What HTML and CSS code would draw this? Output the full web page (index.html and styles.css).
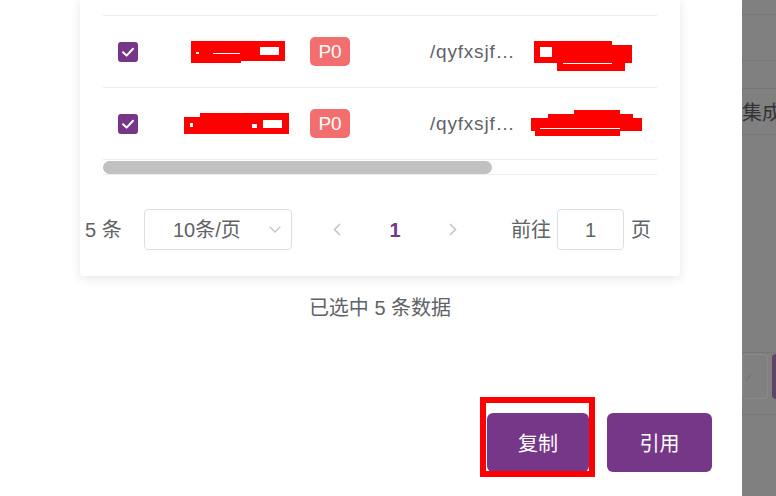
FILE: index.html
```html
<!DOCTYPE html>
<html lang="zh">
<head>
<meta charset="utf-8">
<title>复制</title>
<link rel="stylesheet" href="styles.css">
</head>
<body>
<div class="page">
  <div class="dialog">
    <div class="card">
      <div class="table">
        <div class="thead"></div>
        <div class="row">
          <div class="cell cell-check"><span class="checkbox"><svg width="20" height="20" viewBox="0 0 20 20"><path d="M5 10.2 L8.6 13.6 L15 6.8" fill="none" stroke="#fff" stroke-width="2" stroke-linecap="round" stroke-linejoin="round"/></svg></span></div>
          <div class="cell"><svg class="redact shift7" width="94" height="22" viewBox="0 0 94 22"><rect x="0" y="0" width="94" height="20" fill="#f00"/><rect x="0" y="18" width="50" height="4" fill="#f00"/><rect x="69" y="6" width="19" height="8" fill="#fff"/><rect x="22" y="12" width="27" height="1" fill="#fff"/><rect x="5" y="11" width="3" height="2" fill="#fff"/></svg></div>
          <div class="cell"><span class="tag">P0</span></div>
          <div class="cell path">/qyfxsjf…</div>
          <div class="cell"><svg class="redact shift3" width="100" height="41" viewBox="0 0 100 41"><rect x="0" y="10" width="78" height="22" fill="#f00"/><rect x="78" y="14" width="20" height="18" fill="#f00"/><rect x="23" y="24" width="68" height="16" fill="#f00"/><rect x="6" y="16" width="12" height="10" fill="#fff"/><rect x="29" y="32" width="49" height="1" fill="#fff"/></svg></div>
        </div>
        <div class="row">
          <div class="cell cell-check"><span class="checkbox"><svg width="20" height="20" viewBox="0 0 20 20"><path d="M5 10.2 L8.6 13.6 L15 6.8" fill="none" stroke="#fff" stroke-width="2" stroke-linecap="round" stroke-linejoin="round"/></svg></span></div>
          <div class="cell"><svg class="redact" width="105" height="22" viewBox="0 0 105 22"><rect x="16" y="0" width="89" height="21" fill="#f00"/><rect x="0" y="4" width="17" height="17" fill="#f00"/><rect x="79" y="7" width="19" height="8" fill="#fff"/><rect x="6" y="10" width="3" height="4" fill="#fff"/><rect x="68" y="11" width="5" height="4" fill="#fff"/></svg></div>
          <div class="cell"><span class="tag">P0</span></div>
          <div class="cell path">/qyfxsjf…</div>
          <div class="cell"><svg class="redact" width="112" height="27" viewBox="0 0 112 27"><rect x="43" y="0" width="46" height="8" fill="#f00"/><rect x="17" y="4" width="85" height="9" fill="#f00"/><rect x="0" y="8" width="111" height="13" fill="#f00"/><rect x="4" y="18" width="85" height="8" fill="#f00"/><rect x="9" y="18" width="80" height="1" fill="#fff"/></svg></div>
        </div>
        <div class="scroll"><div class="thumb"></div></div>
      </div>
      <div class="pagination">
        <span class="total">5 条</span>
        <div class="select">
          <span>10条/页</span>
          <svg width="12" height="7" viewBox="0 0 12 7"><path d="M0.6 0.6 L6 6 L11.4 0.6" fill="none" stroke="#c0c4cc" stroke-width="1.3"/></svg>
        </div>
        <span class="pbtn prev"><svg width="8" height="13" viewBox="0 0 8 13"><path d="M7 1 L1.5 6.5 L7 12" fill="none" stroke="#c0c4cc" stroke-width="1.6"/></svg></span>
        <span class="pbtn pager">1</span>
        <span class="pbtn next"><svg width="8" height="13" viewBox="0 0 8 13"><path d="M1 1 L6.5 6.5 L1 12" fill="none" stroke="#c0c4cc" stroke-width="1.6"/></svg></span>
        <span class="jump">前往</span>
        <span class="jump-input">1</span>
        <span class="jump-unit">页</span>
      </div>
    </div>
    <p class="selected">已选中 5 条数据</p>
    <div class="footer">
      <div class="marked"><button class="btn btn-copy">复制</button></div>
      <button class="btn btn-quote">引用</button>
    </div>
  </div>
  <div class="mask">
    <div class="m-row m-r1"></div>
    <div class="m-row m-r2"></div>
    <div class="m-row m-r3"></div>
    <div class="m-row m-r4">集成</div>
    <div class="m-gap"></div>
    <div class="m-row m-tools">
      <span class="m-box"><svg width="8" height="6" viewBox="0 0 8 6"><path d="M0.5 5.5 L5 1" fill="none" stroke="#6a6a6a" stroke-width="1"/></svg></span>
      <span class="m-purple"></span>
    </div>
  </div>
</div>
</body>
</html>
```

FILE: styles.css
```css
* { box-sizing: border-box; }
html, body { margin: 0; padding: 0; }
body {
  width: 776px;
  height: 496px;
  overflow: hidden;
  background: #fff;
  font-family: "Liberation Sans", "Noto Sans CJK SC", sans-serif;
  color: #606266;
}
.page { display: flex; height: 496px; }
.dialog {
  width: 742px;
  flex: none;
  display: flex;
  flex-direction: column;
  background: #fff;
}
.card {
  margin-left: 80px;
  width: 600px;
  background: #fff;
  border-radius: 0 0 4px 4px;
  box-shadow: 0 2px 12px rgba(0, 0, 0, 0.1);
  padding: 0 23px 26px;
}
.thead { height: 16px; border-bottom: 1px solid #ebeef5; }
.row {
  display: grid;
  grid-template-columns: 81px 126px 120px 101px 1fr;
  align-items: center;
  height: 72px;
  border-bottom: 1px solid #ebeef5;
}
.cell { display: flex; align-items: center; }
.cell-check { padding-left: 15px; }
.checkbox {
  width: 20px;
  height: 20px;
  border-radius: 3px;
  background: #773789;
  display: block;
}
.checkbox svg { display: block; }
.redact { display: block; }
.shift7 { margin-left: 7px; }
.shift3 { margin-left: 3px; }
.tag {
  width: 40px;
  height: 29px;
  border-radius: 5px;
  background: #f36e6e;
  color: #fff;
  font-size: 19px;
  display: flex;
  align-items: center;
  justify-content: center;
}
.path {
  font-size: 19px;
  letter-spacing: 0.8px;
  white-space: nowrap;
  color: #606266;
}
.scroll { height: 15px; border-bottom: 1px solid #ebeef5; padding-top: 1px; }
.thumb { width: 389px; height: 13px; border-radius: 7px; background: #c1c1c1; }

.pagination {
  margin: 34px 0 0 -18px;
  height: 41px;
  display: flex;
  align-items: center;
  font-size: 20px;
  line-height: 28px;
  color: #606266;
  white-space: nowrap;
}
.total { width: 59px; flex: none; }
.select {
  width: 148px;
  height: 41px;
  flex: none;
  border: 1px solid #dcdfe6;
  border-radius: 4px;
  display: flex;
  align-items: center;
  justify-content: space-between;
  padding: 0 10px 0 28px;
}
.select svg { display: block; }
.pbtn {
  width: 42px;
  height: 41px;
  flex: none;
  display: flex;
  align-items: center;
  justify-content: center;
}
.prev { margin-left: 24px; }
.pager { margin-left: 16px; color: #773789; font-weight: bold; }
.next { margin-left: 16px; }
.jump { margin-left: 37px; }
.jump-input {
  margin-left: 6px;
  width: 67px;
  height: 41px;
  border: 1px solid #dcdfe6;
  border-radius: 4px;
  display: flex;
  align-items: center;
  justify-content: center;
}
.jump-unit { margin-left: 7px; }

.selected {
  margin: 18px 0 0 80px;
  width: 600px;
  text-align: center;
  font-size: 20px;
  line-height: 28px;
  color: #606266;
}
.footer {
  margin-top: 91px;
  display: flex;
  justify-content: flex-end;
  gap: 18px;
  padding-right: 30px;
}
.btn {
  height: 59px;
  border: none;
  border-radius: 6px;
  background: #773789;
  color: #fff;
  font-family: "Liberation Sans", "Noto Sans CJK SC", sans-serif;
  font-size: 20px;
  padding: 0;
}
.btn-copy { width: 102px; display: block; }
.btn-quote { width: 105px; }
.marked { position: relative; }
.marked::after {
  content: "";
  position: absolute;
  left: -7px;
  top: -16px;
  right: -6px;
  bottom: -5px;
  border: 6px solid #f00;
  pointer-events: none;
}

.mask {
  flex: 1;
  background: #808080;
  overflow: hidden;
  display: flex;
  flex-direction: column;
}
.m-row { flex: none; border-bottom: 1px solid #76777a; }
.m-r1 { height: 15px; }
.m-r2 { height: 46px; }
.m-r3 { height: 28px; }
.m-r4 {
  height: 46px;
  font-size: 20px;
  line-height: 46px;
  color: #333336;
  white-space: nowrap;
  padding-top: 2px;
  font-family: "Noto Sans CJK SC", sans-serif;
  line-height: 42px;
}
.m-gap { height: 218px; flex: none; border-bottom: 1px solid #76777a; }
.m-tools {
  height: 62px;
  display: flex;
  align-items: flex-start;
  gap: 4px;
  padding-top: 1px;
}
.m-box {
  width: 26px;
  height: 45px;
  flex: none;
  border: 1px solid #8a8a8a;
  border-radius: 4px;
  display: flex;
  align-items: center;
  padding-left: 3px;
}
.m-purple {
  width: 12px;
  height: 45px;
  flex: none;
  border-radius: 4px;
  background: #5e4568;
}
```
